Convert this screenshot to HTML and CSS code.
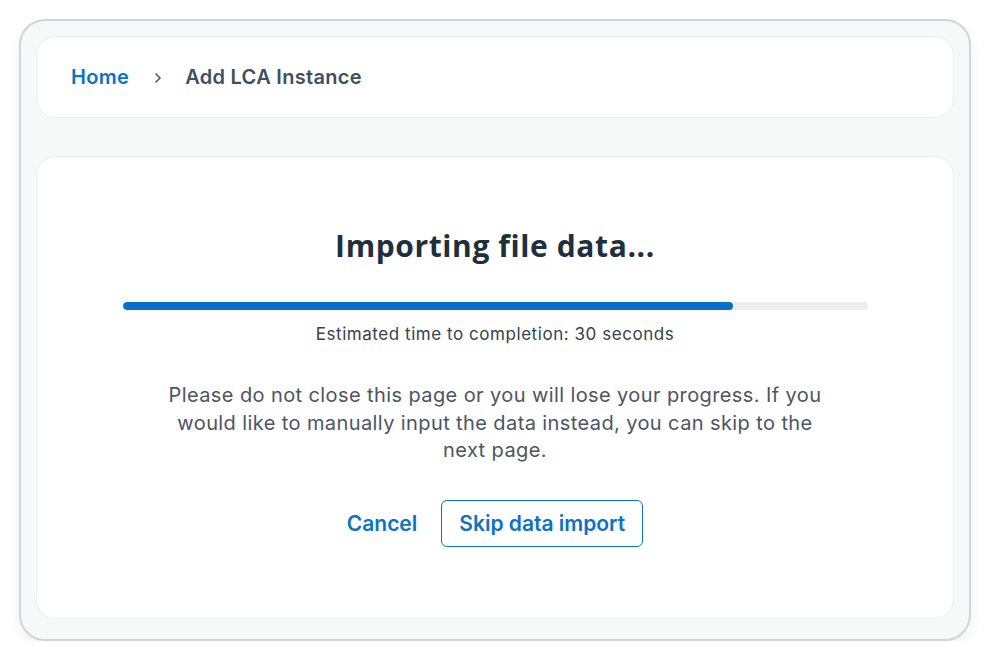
FILE: index.html
```html
<!DOCTYPE html>
<html>
<head>
<meta charset="utf-8">
<link rel="stylesheet" href="styles.css">
</head>
<body>
<div class="frame">
  <nav class="card crumbs">
    <a class="crumb-link">Home</a>
    <svg class="chev" width="10" height="12" viewBox="0 0 10 12"><path d="M3 2l4 4-4 4" fill="none" stroke="#4b5563" stroke-width="1.6" stroke-linecap="round" stroke-linejoin="round"/></svg>
    <span class="crumb-current">Add LCA Instance</span>
  </nav>
  <main class="card content">
    <h1 class="title">Importing file data...</h1>
    <div class="track"><div class="fill" style="width:82%"></div></div>
    <p class="eta">Estimated time to completion: 30 seconds</p>
    <p class="note">Please do not close this page or you will lose your progress. If you would like to manually input the data instead, you can skip to the next page.</p>
    <div class="actions">
      <button class="btn-text">Cancel</button>
      <button class="btn-outline">Skip data import</button>
    </div>
  </main>
</div>
</body>
</html>
```
FILE: styles.css
```css
html, body { margin: 0; padding: 0; background: #ffffff; }
body { font-family: Inter, "Noto Sans", sans-serif; padding: 19px 0 0 19px; }
.frame {
  box-sizing: border-box;
  width: 952px;
  height: 622px;
  border: 2px solid #d1d5d9;
  border-radius: 26px;
  background: #f7f8f8;
  box-shadow: 0 6px 14px rgba(0,0,0,0.06);
  padding: 15px 15px 20px;
  display: flex;
  flex-direction: column;
  gap: 38px;
}
.card {
  box-sizing: border-box;
  background: #fff;
  border: 1px solid #eef0f1;
  border-radius: 20px;
}
.crumbs {
  height: 82px;
  flex: none;
  display: flex;
  align-items: center;
  padding-left: 34px;
  font-size: 20px;
  font-weight: 600;
  letter-spacing: 0.3px;
}
.crumb-link { color: #0b72c6; }
.chev { margin: 1px 22px 0 24px; }
.crumb-current { color: #3d4f61; }
.content {
  flex: 1;
  display: flex;
  flex-direction: column;
  align-items: center;
  padding: 0 80px;
}
.title {
  margin: 71px 0 0;
  font-family: "Open Sans", sans-serif;
  font-weight: 700;
  font-size: 30px;
  letter-spacing: 0.6px;
  line-height: 36px;
  color: #1f2f3d;
}
.track {
  margin-top: 38px;
  width: 745px;
  height: 8px;
  border-radius: 4px;
  background: #eeeeee;
  overflow: hidden;
}
.fill { height: 100%; background: #0b6fc7; border-radius: 4px; }
.eta {
  margin: 13px 0 0;
  font-size: 17px;
  letter-spacing: 0.55px;
  line-height: 22px;
  color: #374151;
}
.note {
  margin: 37px 0 0;
  width: 664px;
  text-align: center;
  font-size: 20px;
  letter-spacing: 0.4px;
  line-height: 27.5px;
  color: #4b5563;
}
.actions {
  margin-top: 35px;
  display: flex;
  align-items: center;
  gap: 24px;
}
.btn-text, .btn-outline {
  font-family: Inter, sans-serif;
  font-size: 21px;
  font-weight: 600;
  color: #0b72c6;
  background: none;
  cursor: pointer;
}
.btn-text { border: none; padding: 0; }
.btn-outline {
  border: 1.5px solid #0b72c6;
  border-radius: 6px;
  height: 47px;
  padding: 0 17px;
}
```
